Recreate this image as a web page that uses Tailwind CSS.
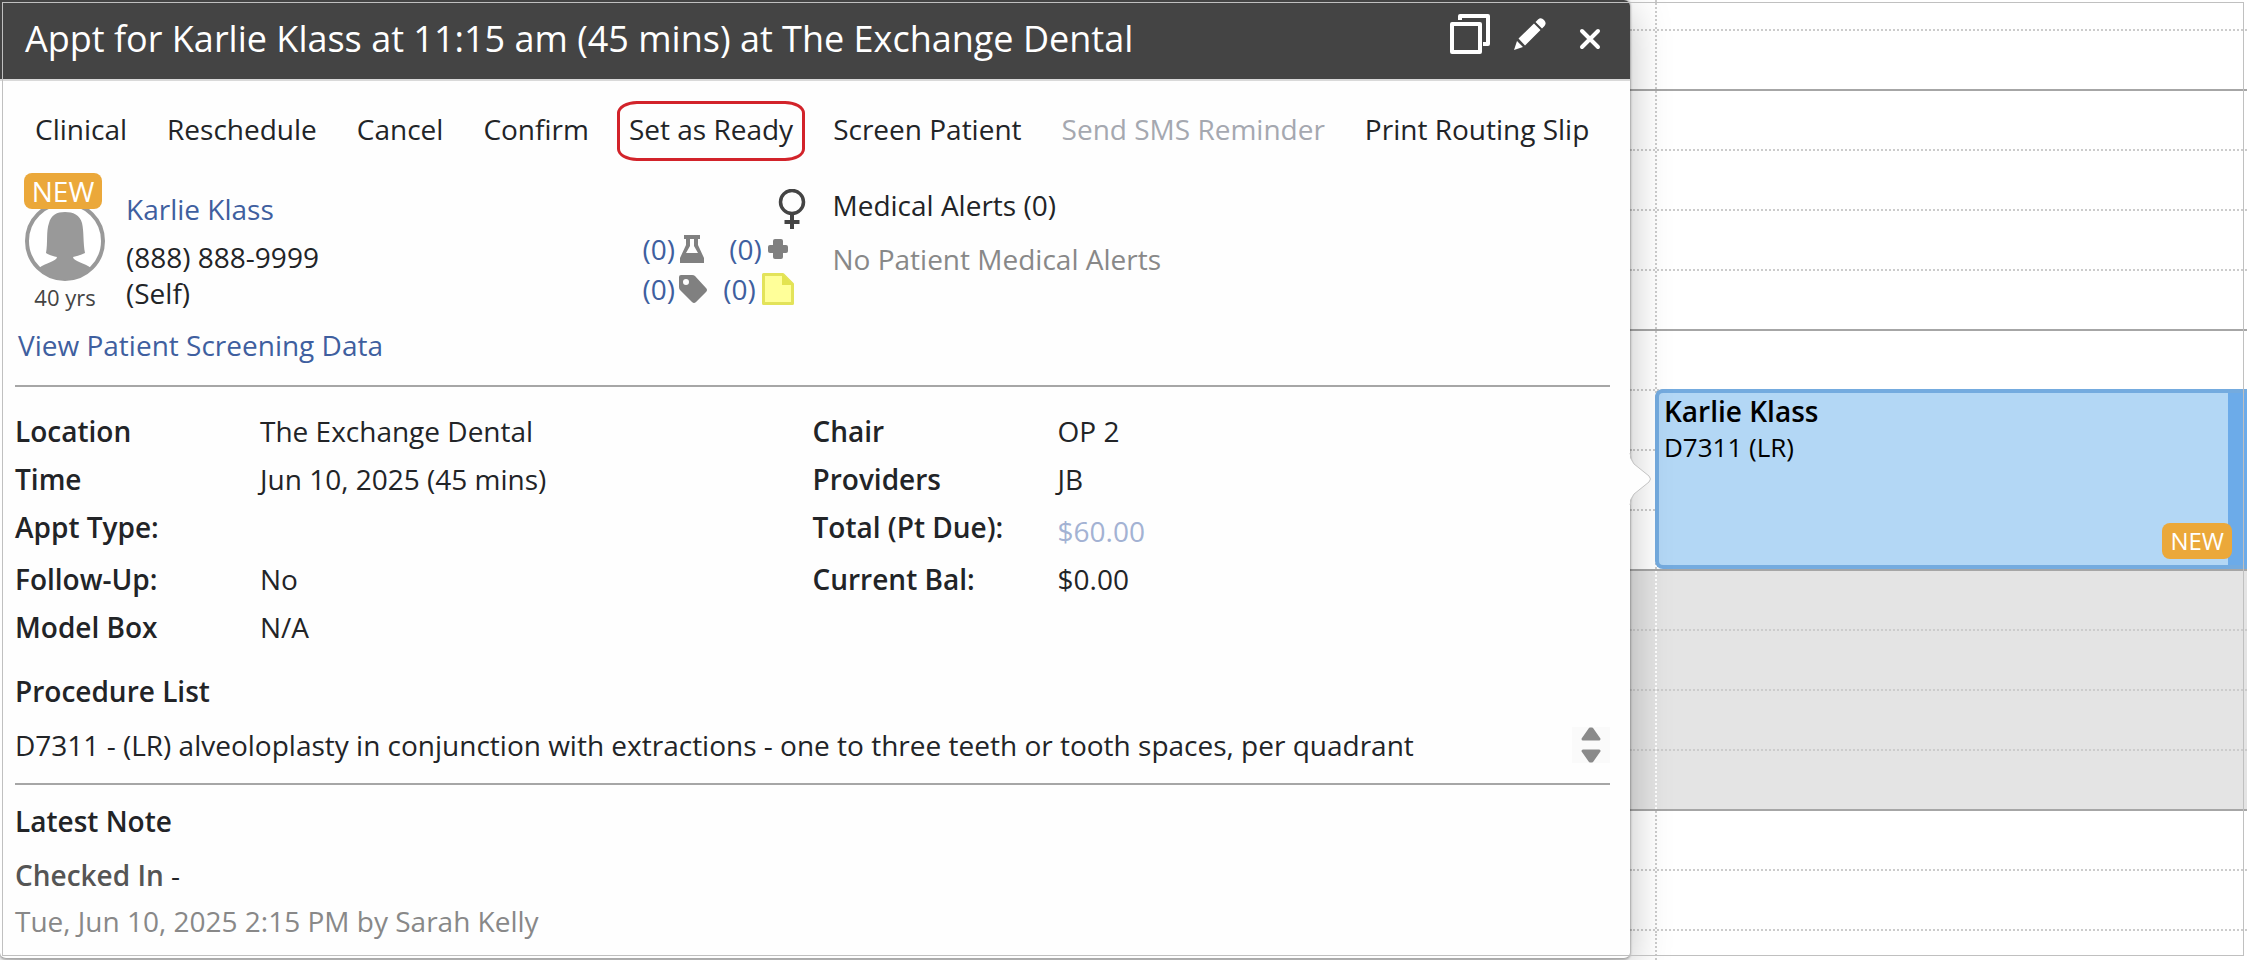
<!DOCTYPE html>
<html lang="en">
    <head>
        <meta charset="UTF-8" />
        <meta name="viewport" content="width=device-width, initial-scale=1.0" />
        <title>Appointment - The Exchange Dental</title>
        <script src="https://cdn.jsdelivr.net/npm/@tailwindcss/browser@4"></script>
        <style>
            body {
                font-family: "Open Sans", "Noto Sans", sans-serif;
            }
        </style>
    </head>
    <body class="bg-white text-[28px] leading-9 text-[#222427]">
        <div class="relative grid min-h-screen grid-cols-[1630fr_617fr] overflow-hidden">
            <!-- Appointment popup -->
            <section class="relative z-10 self-start rounded-md border-b border-[#aaa] bg-[#fefefe] shadow-[0_0_2px_1px_rgba(0,0,0,0.25),0_10px_40px_rgba(0,0,0,0.25)]">
                <header class="flex h-[81px] items-center justify-between rounded-tr-md border-b-2 border-[#d9d9d9] bg-[#444] pr-[22px] pb-px pl-[25px] text-white">
                    <h1 class="text-[36px]">Appt for Karlie Klass at 11:15 am (45 mins) at The Exchange Dental</h1>
                    <div class="flex items-center gap-6">
                        <button type="button" aria-label="Duplicate" class="-mt-[10px]">
                            <svg class="h-10 w-10" viewBox="0 0 40 40" fill="none" stroke="currentColor" stroke-width="4" stroke-linejoin="round">
                                <rect x="2" y="10" width="28" height="28" />
                                <path d="M10 6V2h28v28h-5" />
                            </svg>
                        </button>
                        <button type="button" aria-label="Edit" class="-mt-[10px]">
                            <svg class="h-8 w-8" viewBox="0 0 32 32" fill="currentColor">
                                <path d="M0 32l3-9 6 6zM4.500 20.500L20 5.500l6.500 6.500L11 27.500zM21.500 4L24 1.500Q27 -1 30 2T30.500 8L28 10.500z" />
                            </svg>
                        </button>
                        <button type="button" aria-label="Close" class="pr-2 pl-[10px]">
                            <svg class="h-5 w-5 overflow-visible" viewBox="0 0 20 20" fill="none" stroke="currentColor" stroke-width="4" stroke-linecap="round">
                                <path d="M2 2l16 16M18 2L2 18" />
                            </svg>
                        </button>
                    </div>
                </header>

                <nav class="flex h-24 items-center gap-10 pl-[35px] whitespace-nowrap">
                    <button type="button">Clinical</button>
                    <button type="button">Reschedule</button>
                    <button type="button">Cancel</button>
                    <button type="button">Confirm</button>
                    <button type="button" class="relative">
                        Set as Ready
                        <span class="absolute -inset-x-3 -top-[10px] -bottom-[14px] rounded-[20px/12px] border-3 border-[#d2232a]"></span>
                    </button>
                    <button type="button">Screen Patient</button>
                    <button type="button" class="text-[#a5a8b0]" disabled>Send SMS Reminder</button>
                    <button type="button">Print Routing Slip</button>
                </nav>

                <div class="pr-5 pb-[19px] pl-[15px]">
                    <!-- Patient summary -->
                    <div class="-mt-1 grid grid-cols-2">
                        <div class="flex pl-[10px]">
                            <div class="flex w-20 flex-col items-center">
                                <span class="relative z-10 mr-1 rounded-lg bg-[#eba83a] px-2 text-white">NEW</span>
                                <svg class="-mt-2 h-20 w-20" viewBox="0 0 80 80">
                                    <circle cx="40" cy="40" r="38" fill="#fff" stroke="#999" stroke-width="4" />
                                    <path fill="#999" d="M40 11C48 11 55 14 57 22C59 30 58 42 60 52C56 54 52 55 48 56C48 60 60 62 66 67C59 75 51 79 40 79S21 75 14 67C20 62 32 60 32 56C28 55 24 54 21 52C23 42 21 30 24 22C26 14 32 11 40 11Z" />
                                </svg>
                                <span class="text-[22px] leading-8 text-[#444]">40 yrs</span>
                            </div>
                            <div class="ml-[21px] pt-[18px]">
                                <a href="#" class="block text-[#3f5f9f]">Karlie Klass</a>
                                <p class="mt-3">(888) 888-9999</p>
                                <p>(Self)</p>
                            </div>
                            <div class="ml-auto flex flex-col items-end pt-4">
                                <svg class="mr-[7px] h-10 w-7" viewBox="0 0 28 40" fill="none" stroke="#444" stroke-width="4">
                                    <circle cx="14" cy="13" r="11.500" stroke-width="3.500" />
                                    <path d="M14 24v16M6.500 33h15" />
                                </svg>
                                <div class="mr-[18px] grid grid-cols-[80px_72px] text-[#3f5f9f]">
                                    <a href="#" class="flex h-10 items-center gap-1" aria-label="Lab cases">
                                        (0)
                                        <svg class="h-7 w-7" viewBox="0 0 28 28">
                                            <path fill="#808080" fill-rule="evenodd" d="M5 0h16v4h-2v6l6 13v5H1v-5l6-13V4H5zM11 4v7l-4 7h12l-4-7V4z" />
                                        </svg>
                                    </a>
                                    <a href="#" class="flex h-10 items-center justify-center gap-1.5" aria-label="Treatments">
                                        (0)
                                        <svg class="h-5 w-5" viewBox="0 0 20 20" fill="#808080">
                                            <rect x="5" width="10" height="20" rx="2" />
                                            <rect y="6" width="20" height="8" rx="2" />
                                        </svg>
                                    </a>
                                    <a href="#" class="flex h-10 items-center gap-1" aria-label="Tags">
                                        (0)
                                        <svg class="h-7 w-7" viewBox="0 0 28 28">
                                            <path fill="#808080" fill-rule="evenodd" d="M2 0h11q2 0 3 1l11 12q2 2 0 4L17 27q-2 2-4 0L1 15q-1-1-1-3V2q0-2 2-2zM7 4a3 3 0 1 0 0 6a3 3 0 1 0 0-6z" />
                                        </svg>
                                    </a>
                                    <a href="#" class="flex h-10 items-center justify-center gap-1.5" aria-label="Sticky notes">
                                        (0)
                                        <svg class="h-8 w-8" viewBox="0 0 32 32">
                                            <path fill="#ffff99" stroke="#e3e35a" stroke-width="3" stroke-linejoin="round" d="M1.500 1.500H21L30.500 11V30.500H1.500z" />
                                            <path fill="#e3e34f" d="M20 1l11 11H20z" />
                                        </svg>
                                    </a>
                                </div>
                            </div>
                        </div>
                        <div class="pt-[14px] pl-5">
                            <p>Medical Alerts (0)</p>
                            <p class="mt-[18px] text-[#888]">No Patient Medical Alerts</p>
                        </div>
                    </div>
                    <a href="#" class="mt-[14px] ml-[3px] block text-[#3f5f9f]">View Patient Screening Data</a>
                    <hr class="mt-[22px] border-t-2 border-[#a6a6a6]" />

                    <!-- Appointment details -->
                    <div class="grid grid-cols-2 pt-5">
                        <dl class="grid grid-cols-[245px_1fr] grid-rows-[48px_48px_52px_48px_48px] leading-12">
                            <dt class="font-semibold">Location</dt>
                            <dd>The Exchange Dental</dd>
                            <dt class="font-semibold">Time</dt>
                            <dd>Jun 10, 2025 (45 mins)</dd>
                            <dt class="font-semibold">Appt Type:</dt>
                            <dd></dd>
                            <dt class="font-semibold">Follow-Up:</dt>
                            <dd>No</dd>
                            <dt class="font-semibold">Model Box</dt>
                            <dd>N/A</dd>
                        </dl>
                        <dl class="grid grid-cols-[245px_1fr] grid-rows-[48px_48px_52px_48px_48px] leading-12">
                            <dt class="font-semibold">Chair</dt>
                            <dd>OP 2</dd>
                            <dt class="font-semibold">Providers</dt>
                            <dd>JB</dd>
                            <dt class="font-semibold">Total (Pt Due):</dt>
                            <dd class="pt-1"><a href="#" class="text-[#a3b2d3]">$60.00</a></dd>
                            <dt class="font-semibold">Current Bal:</dt>
                            <dd>$0.00</dd>
                        </dl>
                    </div>

                    <h2 class="mt-4 leading-12 font-semibold">Procedure List</h2>
                    <div class="mt-3 flex justify-between">
                        <p>D7311 - (LR) alveoloplasty in conjunction with extractions - one to three teeth or tooth spaces, per quadrant</p>
                        <div class="flex h-9 w-[38px] flex-col items-center justify-between bg-[#fafafa]">
                            <button type="button" aria-label="Scroll up">
                                <svg class="block h-[14px] w-5" viewBox="0 0 20 14" fill="#8a8a8a" stroke="#8a8a8a" stroke-width="3" stroke-linejoin="round">
                                    <path d="M2 12L9 2h2l7 10z" />
                                </svg>
                            </button>
                            <button type="button" aria-label="Scroll down">
                                <svg class="block h-[14px] w-5" viewBox="0 0 20 14" fill="#8a8a8a" stroke="#8a8a8a" stroke-width="3" stroke-linejoin="round">
                                    <path d="M2 2l7 10h2l7-10z" />
                                </svg>
                            </button>
                        </div>
                    </div>
                    <hr class="mt-5 border-t-2 border-[#a6a6a6]" />

                    <h2 class="mt-3 leading-12 font-semibold">Latest Note</h2>
                    <p class="mt-1.5 leading-12"><span class="font-semibold text-[#555]">Checked In</span> -</p>
                    <p class="mt-1 text-[#888]">Tue, Jun 10, 2025 2:15 PM by Sarah Kelly</p>
                </div>

                <!-- Pointer to the appointment -->
                <svg class="absolute top-[453px] -right-[21px] h-[52px] w-[22px] overflow-visible" viewBox="0 0 22 52">
                    <path fill="#fefefe" d="M0 0Q1 7 5 11L20 23Q23 26 20 29L5 41Q1 45 0 52z" />
                    <path fill="none" stroke="#c4c4c4" d="M1 0Q2 7 5 11L20 23Q23 26 20 29L5 41Q2 45 1 52" />
                </svg>
            </section>

            <!-- Calendar column -->
            <section class="relative">
                <div id="slots"></div>
                <article class="absolute top-[389px] right-0 left-[25px] flex h-[180px] rounded-l-lg border-y-4 border-l-4 border-[#74abdf] bg-[#b3d7f5] text-black">
                    <div class="grow px-[5px]">
                        <h3 class="font-semibold">Karlie Klass</h3>
                        <p class="text-[26px]">D7311 (LR)</p>
                    </div>
                    <div class="w-[19px] bg-[#6cabe9]"></div>
                    <span class="absolute right-[15px] bottom-[6px] rounded-lg bg-[#eba83a] px-2 text-[24px] text-white">NEW</span>
                </article>
            </section>

            <div class="pointer-events-none absolute top-[2px] right-[3px] bottom-1 left-[2px] z-20 border border-[#c0c0c0]"></div>
        </div>

        <script>
            // One entry per 15 minute slot, top to bottom
            const slots = [
                "first", "hour", "open", "open", "open", "hour",
                "open", "open", "open", "hour",
                "closed", "closed", "closed", "closedHour",
                "open", "open", "last",
            ];
            const rowClass = {
                first: "h-[31px] border-b-2 border-dotted border-[#ccc] pl-[25px]",
                open: "h-[60px] border-b-2 border-dotted border-[#ccc] pl-[25px]",
                hour: "h-[60px] border-b-2 border-[#a6a6a6] pl-[25px]",
                closed: "h-[60px] border-b-2 border-dotted border-[#ccc] bg-[#e4e4e4] pl-[25px]",
                closedHour: "h-[60px] border-b-2 border-[#a6a6a6] bg-[#e4e4e4] pl-[25px]",
                last: "h-[29px] pl-[25px]",
            };
            const container = document.getElementById("slots");

            slots.forEach((slot) => {
                const row = document.createElement("div");
                const cell = document.createElement("div");
                row.className = rowClass[slot];
                cell.className = slot.startsWith("closed")
                    ? "h-full border-l-2 border-dotted border-white"
                    : "h-full border-l-2 border-dotted border-[#ccc]";
                row.appendChild(cell);
                container.appendChild(row);
            });
        </script>
    </body>
</html>
